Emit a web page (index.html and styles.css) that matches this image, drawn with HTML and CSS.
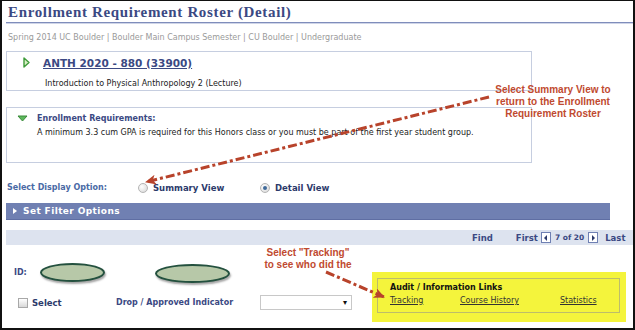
FILE: index.html
```html
<!doctype html>
<html lang="en">
<head>
  <meta charset="UTF-8">
  <title>Enrollment Requirement Roster (Detail)</title>
  <link rel="stylesheet" href="styles.css">
</head>
<body>
<div class="screen">
  <h1 class="page-title">Enrollment Requirement Roster (Detail)</h1>
  <p class="term">Spring 2014 UC Boulder | Boulder Main Campus Semester | CU Boulder | Undergraduate</p>

  <section class="box class-box">
    <div class="class-row">
      <svg class="tri-right" width="7" height="11" viewBox="0 0 7 11"><path d="M1 1 L6 5.5 L1 10 Z" fill="#d8efc4" stroke="#3f9b3a" stroke-width="1.4" stroke-linejoin="round"/></svg>
      <a class="class-link" href="#">ANTH 2020 - 880 (33900)</a>
    </div>
    <p class="class-desc">Introduction to Physical Anthropology 2 (Lecture)</p>
  </section>

  <section class="box req-box">
    <div class="req-head">
      <svg class="tri-down" width="11" height="7" viewBox="0 0 11 7"><path d="M1 1 L10 1 L5.5 6 Z" fill="#5cb85c" stroke="#3a8a3a" stroke-width="1" stroke-linejoin="round"/></svg>
      <span>Enrollment Requirements:</span>
    </div>
    <p class="req-text">A minimum 3.3 cum GPA is required for this Honors class or you must be part of the first year student group.</p>
  </section>

  <div class="display-opt">
    <span class="opt-label">Select Display Option:</span>
    <span class="opt opt-summary"><span class="radio"></span>Summary View</span>
    <span class="opt"><span class="radio checked"></span>Detail View</span>
  </div>

  <div class="filter-bar">
    <span class="filter-tri"></span>Set Filter Options
  </div>

  <div class="nav-band">
    <span class="nav-find">Find</span>
    <span class="nav-first">First</span>
    <span class="nav-btn"><span class="arr-left"></span></span>
    <span class="nav-count">7 of 20</span>
    <span class="nav-btn"><span class="arr-right"></span></span>
    <span class="nav-last">Last</span>
  </div>

  <div class="bottom">
    <div class="fields">
      <div class="id-row">
        <span class="id-label">ID:</span>
        <span class="oval oval-a"></span>
        <span class="oval oval-b"></span>
      </div>
      <div class="sel-row">
        <span class="chk-group"><span class="chk"></span>Select</span>
        <span class="drop-label">Drop / Approved Indicator</span>
        <span class="dropdown"><span class="caret">&#9662;</span></span>
      </div>
    </div>
    <div class="audit">
      <div class="audit-inner">
        <p class="audit-head">Audit / Information Links</p>
        <div class="audit-links">
          <a href="#" class="lnk-track">Tracking</a>
          <a href="#" class="lnk-hist">Course History</a>
          <a href="#">Statistics</a>
        </div>
      </div>
    </div>
  </div>

  <!-- callouts drawn over the page -->
  <svg class="arrows" width="635" height="330" viewBox="0 0 635 330">
    <defs>
      <marker id="head" markerWidth="11" markerHeight="10" refX="10" refY="5" orient="auto" markerUnits="userSpaceOnUse">
        <path d="M0 0 L11 5 L0 10 L3 5 Z" fill="#b8432b"/>
      </marker>
    </defs>
    <line x1="489" y1="97" x2="146" y2="182" stroke="#b8432b" stroke-width="3" stroke-dasharray="9 3 3 3" marker-end="url(#head)"/>
    <line x1="326" y1="272" x2="384" y2="297" stroke="#b8432b" stroke-width="3" stroke-dasharray="9 3 3 3" marker-end="url(#head)"/>
  </svg>
  <p class="note note-summary">Select Summary View to<br>return to the Enrollment<br>Requirement Roster</p>
  <p class="note note-track">Select "Tracking"<br>to see who did the</p>
</div>
</body>
</html>
```

FILE: styles.css
```css
body{
  margin: 0;
  background: #fff;
}
.screen{
  position: relative;
  width: 635px;
  height: 330px;
  box-sizing: border-box;
  border: 2px solid #111;
  border-top-width: 1px;
  padding-left: 4px;
  overflow: hidden;
  font-family: "DejaVu Sans", Verdana, sans-serif;
  font-size: 8px;
  color: #222;
}
p{
  margin: 0;
}

/* heading */
.page-title{
  margin: 0;
  padding: 2px 0 0 2px;
  height: 19px;
  line-height: 19px;
  font-family: "Liberation Serif", "DejaVu Serif", serif;
  font-size: 15px;
  font-weight: bold;
  letter-spacing: 0.65px;
  color: #3b4983;
  border-bottom: 1px solid #7f8dbb;
  box-shadow: 0 1px 0 #cfd5e8;
}
.term{
  margin: 9px 0 7px 2px;
  line-height: 12px;
  color: #9a9a9a;
}

/* class boxes */
.box{
  width: 526px;
  box-sizing: border-box;
  border: 1px solid #c6cee0;
}
.class-box{
  height: 40px;
  padding: 4px 0 0 16px;
}
.class-row{
  display: flex;
  align-items: center;
  height: 13px;
}
.tri-right{
  display: block;
}
.class-link{
  margin-left: 13px;
  font-size: 10.5px;
  font-weight: bold;
  color: #3b4983;
}
.class-desc{
  margin: 9px 0 0 22px;
  line-height: 11px;
}
.req-box{
  height: 56px;
  margin-top: 16px;
  padding: 4px 0 0 10px;
}
.req-head{
  display: flex;
  align-items: center;
  height: 12px;
  font-weight: bold;
  color: #3b4983;
}
.tri-down{
  display: block;
  margin-right: 9px;
}
.req-text{
  margin: 3px 0 0 20px;
  line-height: 12px;
}

/* display option */
.display-opt{
  display: flex;
  align-items: center;
  height: 15px;
  margin-top: 17px;
  padding-left: 1px;
  font-weight: bold;
}
.opt-label{
  width: 131px;
  color: #4a6aa5;
}
.opt{
  display: flex;
  align-items: center;
  font-size: 8.5px;
  color: #2c3a6b;
}
.opt-summary{
  width: 122px;
}
.radio{
  width: 8px;
  height: 8px;
  margin-right: 5px;
  border: 1px solid #b5b5b5;
  border-radius: 50%;
  background: radial-gradient(circle at 35% 35%, #fff, #d4d4d4);
  position: relative;
}
.radio.checked::after{
  content: "";
  position: absolute;
  left: 2px;
  top: 2px;
  width: 4px;
  height: 4px;
  border-radius: 50%;
  background: #3f6a9a;
}

/* filter bar */
.filter-bar{
  display: flex;
  align-items: center;
  width: 604px;
  height: 17px;
  margin-top: 8px;
  box-sizing: border-box;
  padding-left: 7px;
  background: #7080b2;
  border-bottom: 1px solid #5f6ea3;
  color: #fff;
  font-size: 9px;
  font-weight: bold;
  letter-spacing: 0.4px;
}
.filter-tri{
  width: 0;
  height: 0;
  margin-right: 6px;
  border-left: 4px solid #fff;
  border-top: 3.5px solid transparent;
  border-bottom: 3.5px solid transparent;
}

/* navigation band */
.nav-band{
  display: flex;
  align-items: center;
  height: 15px;
  margin-top: 10px;
  background: #dde3ef;
  font-weight: bold;
  font-size: 8.5px;
  color: #3b4983;
}
.nav-find{
  margin-left: 466px;
}
.nav-first{
  margin-left: 23px;
}
.nav-btn{
  display: flex;
  align-items: center;
  justify-content: center;
  width: 8px;
  height: 9px;
  margin-left: 3px;
  background: #fff;
  border: 1px solid #6f80b3;
}
.arr-left{
  border-right: 3px solid #2c3a6b;
  border-top: 3px solid transparent;
  border-bottom: 3px solid transparent;
}
.arr-right{
  border-left: 3px solid #2c3a6b;
  border-top: 3px solid transparent;
  border-bottom: 3px solid transparent;
}
.nav-count{
  margin: 0 1px 0 4px;
  font-size: 7.5px;
}
.nav-last{
  margin-left: 7px;
}

/* bottom fields */
.bottom{
  display: flex;
}
.fields{
  width: 366px;
}
.id-row{
  display: flex;
  align-items: center;
  height: 22px;
  margin-top: 16px;
  padding-left: 8px;
  font-weight: bold;
  color: #3b4983;
}
.id-label{
  width: 26px;
}
.oval{
  box-sizing: border-box;
  height: 19px;
  border: 2px solid #24513f;
  border-radius: 50%;
  background: #b7c8a8;
  box-shadow: 1px 2px 2px rgba(0,0,0,0.35);
}
.oval-a{
  width: 65px;
}
.oval-b{
  width: 75px;
  margin: 2px 0 0 50px;
}
.sel-row{
  display: flex;
  align-items: center;
  height: 15px;
  margin-top: 12px;
  padding-left: 12px;
  font-weight: bold;
  color: #3b4983;
}
.chk-group{
  display: flex;
  align-items: center;
  width: 98px;
  font-size: 8.5px;
  color: #2c3a6b;
}
.chk{
  width: 8px;
  height: 8px;
  margin-right: 4px;
  border: 1px solid #a8a8a8;
  background: linear-gradient(#fff, #d8d8d8);
}
.drop-label{
  width: 144px;
}
.dropdown{
  display: flex;
  align-items: center;
  justify-content: flex-end;
  width: 92px;
  height: 15px;
  box-sizing: border-box;
  padding-right: 4px;
  border: 1px solid #c8c8c8;
  background: #fff;
}
.caret{
  font-size: 8px;
  color: #111;
}

/* audit links */
.audit{
  width: 254px;
  height: 50px;
  margin-top: 27px;
  box-sizing: border-box;
  padding: 6px 6px 9px 5px;
  background: #f4f43c;
}
.audit-inner{
  height: 100%;
  box-sizing: border-box;
  padding: 3px 0 0 12px;
  border: 1px solid #bdbd6a;
}
.audit-head{
  line-height: 12px;
  font-weight: bold;
  color: #111;
}
.audit-links{
  display: flex;
  line-height: 12px;
  margin-top: 1px;
}
.audit-links a{
  color: #333;
}
.lnk-track{
  width: 70px;
}
.lnk-hist{
  width: 100px;
}

/* callouts */
.arrows{
  position: absolute;
  left: -2px;
  top: -1px;
  pointer-events: none;
}
.note{
  position: absolute;
  font-family: "Liberation Sans", Arial, sans-serif;
  font-size: 10px;
  font-weight: bold;
  line-height: 12px;
  text-align: center;
  color: #bf4a30;
}
.note-summary{
  left: 484px;
  top: 83px;
  width: 134px;
}
.note-track{
  left: 254px;
  top: 246px;
  width: 104px;
}
```
